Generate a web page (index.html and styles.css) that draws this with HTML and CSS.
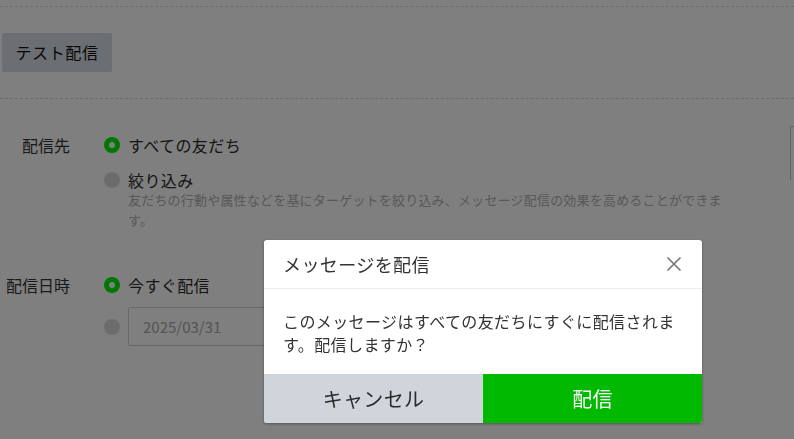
FILE: index.html
```html
<!DOCTYPE html>
<html lang="ja">
<head>
<meta charset="utf-8">
<link rel="stylesheet" href="styles.css">
</head>
<body>
<div class="page">
  <div class="rule-top"></div>
  <div class="toolbar">
    <button class="btn-test">テスト配信</button>
  </div>
  <div class="form">
    <div class="row row-target">
      <div class="label">配信先</div>
      <div class="options">
        <div class="opt"><span class="radio on"></span><span>すべての友だち</span></div>
        <div class="opt opt2"><span class="radio"></span><span>絞り込み</span></div>
        <p class="desc">友だちの行動や属性などを基にターゲットを絞り込み、メッセージ配信の効果を高めることができます。</p>
      </div>
      <div class="side-box"></div>
    </div>
    <div class="row row-date">
      <div class="label">配信日時</div>
      <div class="options">
        <div class="opt"><span class="radio on"></span><span>今すぐ配信</span></div>
        <div class="opt opt-date"><span class="radio"></span><span class="date-input">2025/03/31</span></div>
      </div>
    </div>
  </div>
</div>
<div class="overlay"></div>
<div class="dialog">
  <div class="dlg-head">
    <span class="dlg-title">メッセージを配信</span>
    <svg class="close" width="16" height="16" viewBox="0 0 16 16"><path d="M1.5 1.5 L14.5 14.5 M14.5 1.5 L1.5 14.5" stroke="#777" stroke-width="1.7" fill="none"/></svg>
  </div>
  <div class="dlg-body">このメッセージはすべての友だちにすぐに配信されます。配信しますか？</div>
  <div class="dlg-foot">
    <button class="btn-cancel">キャンセル</button>
    <button class="btn-send">配信</button>
  </div>
</div>
</body>
</html>
```
FILE: styles.css
```css
html, body {
  margin: 0;
  padding: 0;
  background: #fff;
  font-family: "Noto Sans CJK JP", "Noto Sans", sans-serif;
  color: #333;
  overflow: hidden;
  height: 439px;
}
.page {
  padding-top: 6px;
}
.rule-top {
  border-top: 1px dashed #dcdcdc;
}
.toolbar {
  padding: 26px 0 26px 2px;
  border-bottom: 1px dashed #d6d6d6;
}
.btn-test {
  display: block;
  width: 110px;
  height: 39px;
  border: none;
  border-radius: 2px;
  background: #d6dde4;
  color: #111;
  font-family: inherit;
  font-size: 16px;
  letter-spacing: 0.6px;
  padding: 0;
  line-height: 39px;
}
.form {
  padding-top: 35px;
}
.row {
  display: flex;
  align-items: flex-start;
}
.label {
  width: 70px;
  text-align: right;
  font-size: 16px;
  line-height: 22px;
  color: #333;
  margin-right: 34px;
  flex: none;
}
.options {
  flex: none;
}
.opt {
  display: flex;
  align-items: center;
  gap: 8px;
  height: 22px;
  font-size: 16px;
  letter-spacing: 0.4px;
  color: #2a2a2a;
}
.opt2 {
  margin-top: 13px;
  height: 21px;
}
.radio {
  width: 16px;
  height: 16px;
  border-radius: 50%;
  box-sizing: border-box;
  background: #d9d9d9;
  flex: none;
}
.radio.on {
  background: #fff;
  border: 5px solid #00f000;
}
.desc {
  margin: 0 0 0 24px;
  width: 600px;
  font-size: 13px;
  line-height: 20px;
  letter-spacing: 0.2px;
  color: #b0b0b0;
}
.side-box {
  margin-left: auto;
  margin-top: -8px;
  width: 3px;
  height: 53px;
  border-left: 1px solid #c8c8c8;
  border-top: 1px solid #c8c8c8;
}
.row-date {
  margin-top: 44px;
}
.opt-date {
  margin-top: 11px;
  height: 39px;
}
.date-input {
  display: block;
  box-sizing: border-box;
  width: 200px;
  height: 39px;
  border: 1px solid #d0d0d0;
  border-radius: 2px;
  padding-left: 14px;
  line-height: 37px;
  font-size: 15px;
  color: #a8a8a8;
  letter-spacing: 0;
}
.overlay {
  position: fixed;
  inset: 0;
  background: rgba(0, 0, 0, 0.5);
}
.dialog {
  position: fixed;
  left: 264px;
  top: 240px;
  width: 438px;
  background: #fff;
  border-radius: 3px;
  overflow: hidden;
  box-shadow: 0 1px 3px rgba(0,0,0,0.35);
}
.dlg-head {
  display: flex;
  align-items: center;
  justify-content: space-between;
  height: 48px;
  padding: 0 20px 0 19px;
  border-bottom: 1px solid #ececec;
}
.dlg-title {
  font-size: 18px;
  letter-spacing: 0.4px;
  color: #333;
}
.close {
  display: block;
}
.dlg-body {
  padding: 21px 19px 18px 19px;
  font-size: 16px;
  line-height: 23px;
  letter-spacing: 0.4px;
  color: #333;
}
.dlg-foot {
  display: flex;
  height: 49px;
}
.dlg-foot button {
  flex: 1;
  border: none;
  margin: 0;
  padding: 0;
  font-family: inherit;
  font-size: 20px;
  letter-spacing: 0.3px;
}
.btn-cancel {
  background: #d0d5dc;
  color: #2a2a2a;
}
.btn-send {
  background: #00b900;
  color: #fff;
}
```
